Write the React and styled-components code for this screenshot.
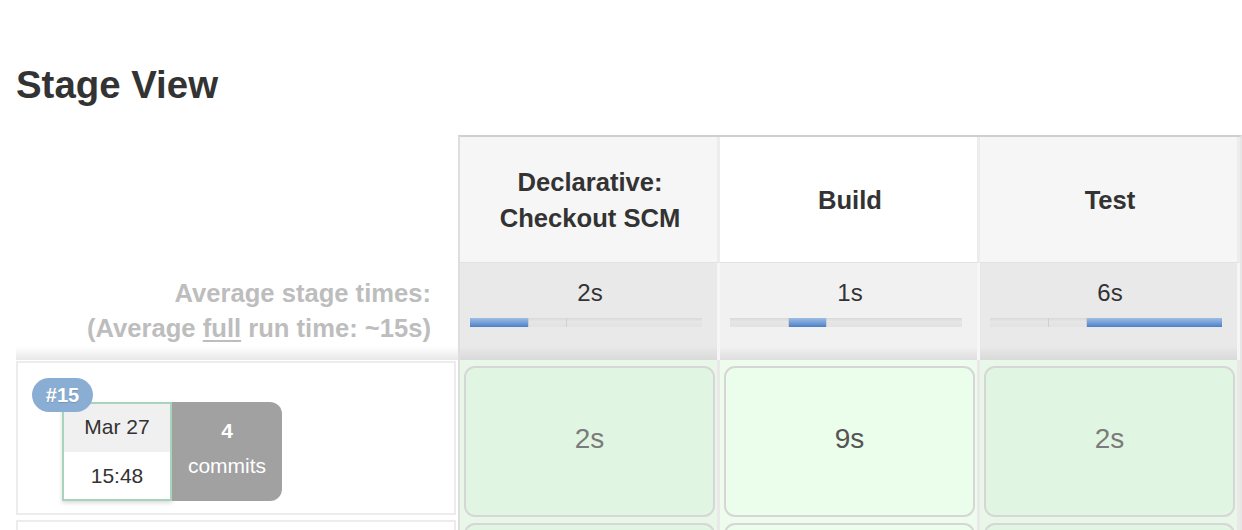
import React from "react";
import styled, { createGlobalStyle } from "styled-components";

const GlobalStyle = createGlobalStyle`
    body {
        margin: 0;
        background: #fff;
        color: #333;
        font-family: "Liberation Sans", Arial, Helvetica, sans-serif;
    }
`;

// stages and their share of the full run, used for the little timeline bars
const stages = [
    { name: ["Declarative:", "Checkout SCM"], avg: "2s", share: 25 },
    { name: ["Build"], avg: "1s", share: 16.4 },
    { name: ["Test"], avg: "6s", share: 58.6 },
];

const runs = [
    { id: 15, date: "Mar 27", time: "15:48", commits: 4, times: ["2s", "9s", "2s"], longest: 1 },
];

const App = () => {
    return (
        <Page>
            <GlobalStyle />
            <Title>Stage View</Title>
            <Layout>
                <LabelColumn>
                    <HeadSpacer />
                    <AvgLabel>
                        Average stage times:
                        <br />
                        (Average <u>full</u> run time: ~15s)
                    </AvgLabel>
                    {runs.map((run) => (
                        <RunLabel key={run.id}>
                            <Badge>#{run.id}</Badge>
                            <DateBox>
                                <DateTop>{run.date}</DateTop>
                                <DateBottom>{run.time}</DateBottom>
                            </DateBox>
                            <Commits>
                                <strong>{run.commits}</strong>
                                <span>commits</span>
                            </Commits>
                        </RunLabel>
                    ))}
                    {/* next (older) run, only its top edge shows in the view */}
                    <RunLabel />
                </LabelColumn>

                <StageTable>
                    <Row>
                        {stages.map((stage, i) => (
                            <HeadCell key={i} $odd={i % 2 === 0}>
                                {stage.name.map((line) => (
                                    <div key={line}>{line}</div>
                                ))}
                            </HeadCell>
                        ))}
                    </Row>
                    <Row>
                        {stages.map((stage, i) => (
                            <AvgCell key={i} $odd={i % 2 === 0}>
                                <AvgTime>{stage.avg}</AvgTime>
                                <Track>
                                    {stages.map((s, j) => (
                                        <Segment
                                            key={j}
                                            $active={i === j}
                                            style={{ width: `${s.share}%` }}
                                        />
                                    ))}
                                </Track>
                            </AvgCell>
                        ))}
                    </Row>
                    {runs.map((run) => (
                        <Row key={run.id}>
                            {run.times.map((t, i) => (
                                <RunCell key={i} $odd={i % 2 === 0}>
                                    <StageBox $odd={i % 2 === 0} $strong={run.longest === i}>
                                        {t}
                                    </StageBox>
                                </RunCell>
                            ))}
                        </Row>
                    ))}
                    <Row>
                        {stages.map((stage, i) => (
                            <RunCell key={i} $odd={i % 2 === 0} $next>
                                <StageBox $odd={i % 2 === 0} />
                            </RunCell>
                        ))}
                    </Row>
                </StageTable>
            </Layout>
        </Page>
    );
};

const Page = styled.div`
    padding: 64px 0 0 16px;
    height: 530px;
    box-sizing: border-box;
    overflow: hidden;
`;
const Title = styled.h2`
    margin: 0 0 29px 0;
    font-size: 38.4px;
    line-height: 42px;
    font-weight: bold;
    color: #333;
`;
const Layout = styled.div`
    display: flex;
    align-items: flex-start;
`;
const LabelColumn = styled.div`
    width: 442px;
    display: flex;
    flex-direction: column;
`;
const HeadSpacer = styled.div`
    height: 128px;
`;
const AvgLabel = styled.div`
    height: 97px;
    box-sizing: border-box;
    padding: 13px 27px 0 0;
    text-align: right;
    white-space: nowrap;
    font-size: 25.6px;
    line-height: 35px;
    font-weight: bold;
    color: #bdbdbd;
    background: linear-gradient(to bottom, #fff 86%, #e8e8e8);
    u {
        text-decoration-thickness: 2px;
        text-underline-offset: 3px;
    }
`;
const RunLabel = styled.div`
    position: relative;
    height: 154px;
    margin: 1px 2px 4px 0;
    box-sizing: border-box;
    border: 2px solid #ececec;
    padding: 39px 0 0 44px;
    display: flex;
    align-items: flex-start;
`;
const Badge = styled.div`
    position: absolute;
    left: 14px;
    top: 15px;
    z-index: 1;
    width: 61px;
    height: 34px;
    border-radius: 17px;
    background: #8aaed3;
    color: #fff;
    font-size: 20px;
    font-weight: bold;
    line-height: 34px;
    text-align: center;
    text-shadow: 0 1px 1px rgba(0, 0, 0, 0.15);
`;
const DateBox = styled.div`
    width: 110px;
    height: 99px;
    box-sizing: border-box;
    border: 2px solid #a8d4be;
    display: flex;
    flex-direction: column;
    box-shadow: 0 2px 4px rgba(0, 0, 0, 0.15);
    font-size: 21px;
    color: #333;
`;
const DateTop = styled.div`
    height: 48px;
    padding-bottom: 2px;
    box-sizing: border-box;
    background: #f0f0f0;
    display: flex;
    align-items: center;
    justify-content: center;
`;
const DateBottom = styled.div`
    flex: 1;
    background: #fff;
    display: flex;
    align-items: center;
    justify-content: center;
`;
const Commits = styled.div`
    width: 110px;
    height: 99px;
    box-sizing: border-box;
    padding-bottom: 8px;
    background: #a1a1a1;
    border-radius: 0 12px 12px 0;
    color: #fff;
    display: flex;
    flex-direction: column;
    align-items: center;
    justify-content: center;
    font-size: 21px;
    line-height: 35px;
    strong {
        font-size: 21px;
    }
`;
const StageTable = styled.div`
    width: 784px;
    box-sizing: border-box;
    border-top: 2px solid #cfcfcf;
    border-left: 2px solid #dedede;
    border-right: 2px solid #e6e6e6;
    display: flex;
    flex-direction: column;
`;
const Row = styled.div`
    display: flex;
`;
const HeadCell = styled.div`
    width: 260px;
    height: 126px;
    box-sizing: border-box;
    border-right: 3px solid #ededed;
    border-bottom: 1px solid #e2e2e2;
    padding-left: 3px;
    background: ${(p) => (p.$odd ? "#f6f6f6" : "#fff")};
    display: flex;
    flex-direction: column;
    justify-content: center;
    align-items: center;
    text-align: center;
    font-size: 25.6px;
    line-height: 36px;
    font-weight: bold;
    color: #333;
`;
const AvgCell = styled.div`
    width: 260px;
    height: 97px;
    box-sizing: border-box;
    border-right: 3px solid #f6f6f6;
    padding-top: 15px;
    background: ${(p) =>
        p.$odd
            ? "linear-gradient(to bottom, #e9e9e9 86%, #d9d9d9)"
            : "linear-gradient(to bottom, #f1f1f1 86%, #dedede)"};
`;
const AvgTime = styled.div`
    padding-left: 3px;
    text-align: center;
    font-size: 24px;
    line-height: 30px;
    color: #333;
`;
const Track = styled.div`
    margin: 10px 0 0 10px;
    width: 232px;
    height: 9px;
    display: flex;
    box-shadow: inset 0 0 0 1px #d2d2d2;
    background: #e4e4e4;
`;
const Segment = styled.div`
    height: 9px;
    box-sizing: border-box;
    border-left: 1px solid #cfcfcf;
    &:first-child {
        border-left: none;
    }
    background: ${(p) =>
        p.$active
            ? "linear-gradient(to bottom, #9dbde4, #6d9ad5 60%, #4c7dc8)"
            : "linear-gradient(to bottom, #d9d9d9, #e6e6e6 40%, #e2e2e2)"};
`;
const RunCell = styled.div`
    width: 260px;
    box-sizing: border-box;
    border-right: 3px solid #e9e9e9;
    padding: ${(p) => (p.$next ? "4px" : "6px")} 2px 2px 4px;
    background: ${(p) => (p.$odd ? "#e9f7e9" : "#eefcee")};
`;
const StageBox = styled.div`
    height: 151px;
    box-sizing: border-box;
    padding-bottom: 5px;
    border: 2px solid #d6d6d6;
    border-radius: 11px;
    background: ${(p) => (p.$odd ? "#e1f6e2" : "#ebfdeb")};
    display: flex;
    align-items: center;
    justify-content: center;
    font-size: 28px;
    color: ${(p) => (p.$strong ? "#555" : "#7b7b7b")};
`;

export default App;
